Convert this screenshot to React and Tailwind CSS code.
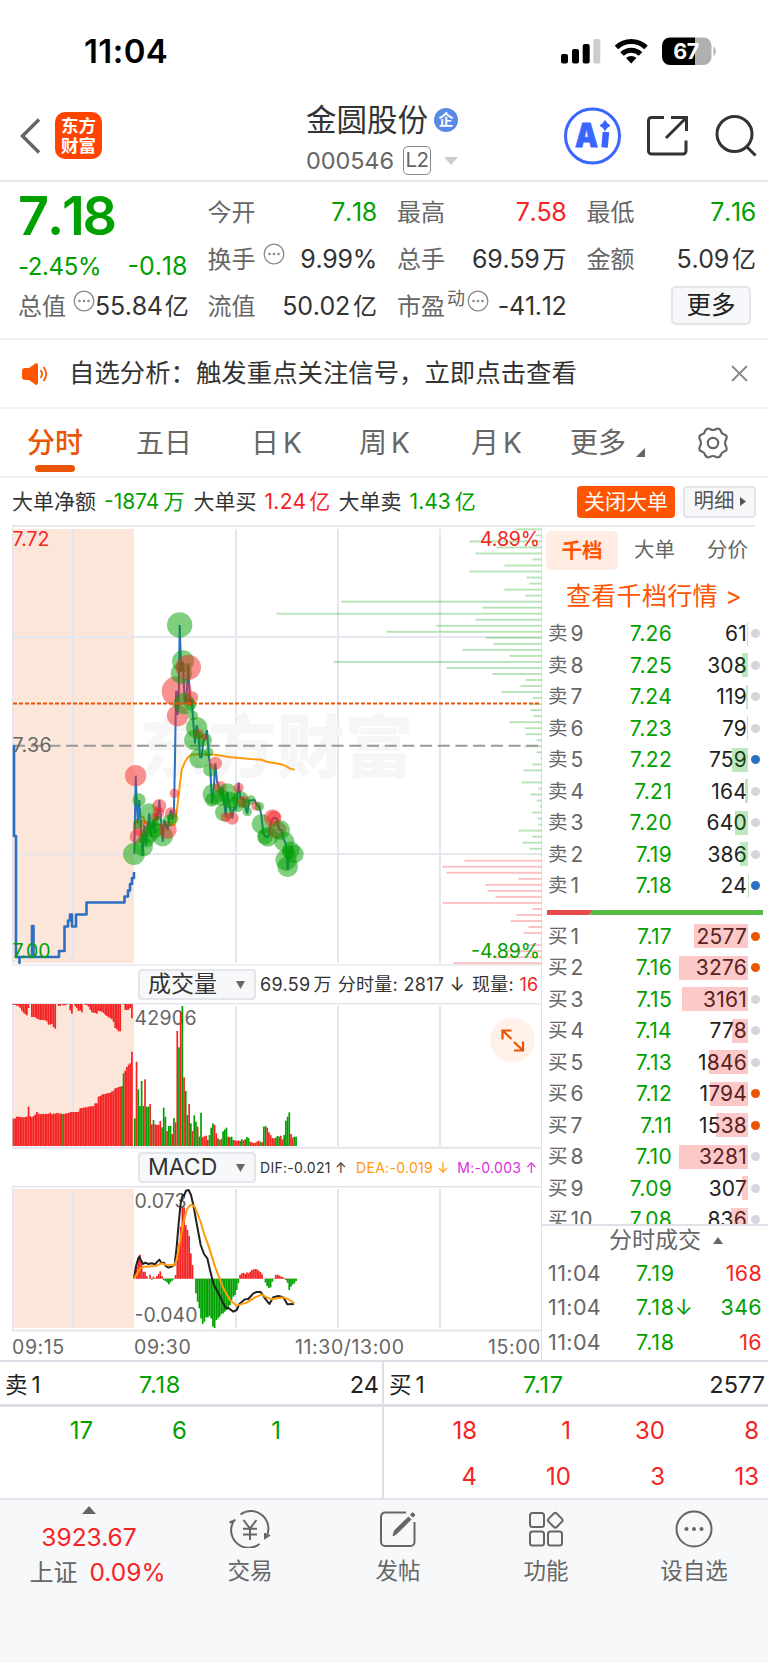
import clsx from 'clsx';

const RED = '#f52323';
const GREEN = '#00a000';

// Big order depth, bar lengths in px from the top of the chart down
const sellDepth = [26, 6, 72, 45, 66, 9, 37, 72, 15, 12, 37, 16, 200, 59, 265, 66, 105, 155, 56, 48, 79, 32, 208, 95, 49, 16, 21, 40, 9, 12, 11, 8, 32, 17, 16, 5, 17, 5, 1, 9, 18, 1, 20, 3, 11, 5, 2, 9, 4, 3, 23, 9, 19, 12, 1];
const buyDepth = [77, 99, 95, 23, 56, 54, 46, 99, 9, 25, 31, 13, 18, 1, 14, 36, 48, 88];

const auctionLine = '14,745 14,836 16,836 16,957 19.5,957 19.5,963 19.5,957 32,957 32,926 33.5,926 33.5,957 59,957 59,951 64.5,951 64.5,926.5 68,926.5 68,920.5 70,920.5 70,914.5 72,914.5 72,926.5 76,926.5 76,914.5 86.5,914.5 86.5,902.5 124.5,902.5 124.5,896.5 128,896.5 128,890.5 130,890.5 130,884 132,884 132,878 134,878 134,872';

// Intraday curves are stored at 3x
const priceLine = '43,762 47,527 53,670 58,600 63,690 68,768 73,675 78,735 83,680 88,640 92,710 98,665 103,690 108,640 113,660 118,600 123,660 128,725 133,660 138,680 143,690 148,650 153,630 158,660 162,625 165,480 168,275 171,275 173,345 176,310 179,75 184,215 189,185 194,310 199,300 205,190 210,310 215,295 220,370 225,430 230,375 235,400 240,472 245,472 250,425 256,415 261,390 266,460 271,510 276,610 281,570 286,490 291,545 297,560 303,590 308,560 313,610 317,650 322,575 327,610 332,635 337,655 342,620 347,630 352,590 356,548 361,590 367,600 372,595 377,625 382,640 387,602 404,600 410,615 418,620 424,645 430,700 436,710 445,710 452,670 460,653 470,655 478,690 485,690 490,715 497,730 503,810 508,760 513,740 520,760';
const averageLine = '47,665 60,650 70,650 75,668 90,675 150,675 165,674 172,620 180,550 185,510 195,485 205,470 215,464 240,463 285,464 310,468 325,471 360,474 390,477 425,479 440,485 480,492 495,497 510,506 524,509';

const bubbles = [
    ['g', 42, 762, 33], ['r', 47, 527, 32], ['g', 57, 600, 20], ['g', 88, 640, 30], ['r', 118, 618, 21], ['r', 65, 685, 26],
    ['r', 51, 710, 22], ['g', 55, 672, 16], ['r', 116, 638, 17], ['g', 70, 740, 29], ['g', 90, 702, 26], ['g', 80, 718, 24],
    ['g', 105, 690, 24], ['g', 128, 708, 31], ['r', 143, 690, 27], ['r', 106, 652, 14], ['r', 153, 640, 18], ['g', 158, 655, 17],
    ['g', 112, 664, 15], ['g', 98, 680, 20], ['g', 145, 662, 18], ['r', 163, 580, 14], ['r', 170, 274, 45], ['r', 173, 347, 32],
    ['g', 179, 75, 38], ['g', 189, 184, 33], ['g', 184, 220, 32], ['r', 205, 202, 38], ['g', 193, 311, 32], ['r', 217, 292, 18],
    ['g', 211, 314, 18], ['r', 208, 308, 10], ['g', 219, 347, 15], ['g', 230, 383, 32], ['r', 235, 402, 15], ['g', 223, 420, 31],
    ['g', 256, 420, 20], ['r', 254, 412, 9], ['g', 266, 456, 14], ['g', 238, 475, 30], ['g', 270, 510, 20], ['r', 286, 490, 20],
    ['g', 280, 583, 32], ['g', 275, 600, 20], ['r', 301, 562, 19], ['g', 322, 580, 30], ['g', 312, 637, 27], ['g', 302, 592, 25],
    ['g', 330, 600, 25], ['r', 317, 652, 15], ['r', 337, 655, 19], ['g', 350, 612, 25], ['g', 361, 598, 25], ['r', 356, 563, 15],
    ['r', 372, 605, 18], ['g', 382, 635, 14], ['g', 393, 600, 14], ['r', 408, 618, 14], ['g', 418, 620, 14], ['g', 378, 612, 14],
    ['g', 425, 672, 30], ['g', 435, 710, 24], ['g', 444, 710, 30], ['r', 458, 654, 26], ['r', 462, 652, 20], ['r', 472, 690, 27],
    ['g', 480, 690, 30], ['g', 493, 725, 30], ['g', 513, 750, 26], ['g', 498, 780, 32], ['g', 503, 800, 31], ['g', 523, 762, 28], ['g', 505, 755, 20],
];

const auctionVolume = [82, 83, 88, 88, 87, 86, 86, 87, 88, 118, 90, 86, 90, 94, 102, 97, 95, 96, 97, 96, 96, 97, 100, 95, 97, 97, 99, 98, 97, 97, 96, 97, 98, 99, 101, 102, 102, 102, 102, 103, 113, 114, 115, 116, 116, 118, 119, 119, 120, 128, 128, 148, 150, 154, 156, 156, 158, 159, 160, 163, 166, 173, 174, 177, 178, 180, 218, 226, 237, 244, 248, 283];
const auctionTop = [3, 3, 5, 7, 11, 20, 26, 30, 34, 12, 0, 39, 39, 40, 44, 46, 48, 48, 48, 49, 52, 62, 62, 60, 69, 74, 0, 6, 6, 2, 5, 4, 2, 0, 19, 29, 0, 7, 13, 21, 19, 25, 0, 3, 4, 8, 17, 25, 26, 27, 29, 21, 22, 23, 27, 32, 36, 40, 42, 46, 54, 72, 76, 82, 82, 0, 2, 17, 18, 17, 12, 43];

const volume = 'g475 r305 g388 g438 g363 g438 r358 g440 g440 r432 r493 g480 r493 r495 r494 r483 g502 g443 g470 r513 g498 g498 r522 g474 r487 r213 g262 r155 g138 r352 g393 g465 r432 g490 r513 g466 g485 r500 g530 g458 r532 r529 r527 r540 g525 g503 g490 r495 r520 g535 r540 r537 g514 g508 g503 r530 g532 g530 g540 r541 r543 r541 g543 g538 r541 r538 g531 g534 r545 r547 r549 r548 r545 r542 g545 r547 g500 g498 r503 r517 r525 r534 r535 g533 g528 g530 r527 r538 g525 g482 g470 g457 r522 r533 g530 g530'.split(' ');

const macd = [0, 36, 63, 72, 51, 21, 21, 8, 0, 12, -3, 6, 2, 8, 14, 22, 8, -4, -7, -11, -17, -11, -6, -2, 11, 56, 106, 156, 216, 214, 161, 146, 128, 76, 41, 0, -44, -69, -89, -119, -136, -129, -116, -116, -112, -119, -144, -148, -124, -119, -114, -106, -104, -99, -94, -89, -79, -64, -54, -49, -34, -14, 11, 16, 18, 14, 19, 16, 21, 26, 28, 29, 28, 24, 20, 13, 0, -12, -22, -28, -26, -9, -1, 11, 12, 10, 7, 5, 2, -4, -12, -34, -24, -17, -14, -7];
const difLine = '402,955 408,918 415,895 418,890 425,905 430,912 436,908 445,912 455,910 465,913 472,905 478,899 485,910 492,908 497,918 505,923 515,920 524,915 530,860 536,790 542,730 548,705 552,708 558,692 566,690 573,705 580,735 590,790 602,855 612,882 622,895 630,930 640,970 650,990 658,1005 670,1030 678,1045 685,1044 700,1055 710,1050 718,1032 735,1018 745,1017 760,1000 770,996 782,996 795,1015 808,1032 820,1012 835,1008 850,1012 862,1033 882,1032';
const deaLine = '402,955 412,940 420,925 435,920 465,918 485,910 500,915 522,916 530,900 537,860 550,790 560,750 568,738 576,734 585,742 600,780 612,820 628,865 645,920 670,985 690,1020 710,1037 740,1028 765,1012 785,1004 800,1012 815,1018 850,1012 865,1018 883,1029';

const sells = [
    ['9', '7.26', '61', 1], ['8', '7.25', '308', 6], ['7', '7.24', '119', 2], ['6', '7.23', '79', 1], ['5', '7.22', '759', 16, 'blue'],
    ['4', '7.21', '164', 3], ['3', '7.20', '640', 13], ['2', '7.19', '386', 8], ['1', '7.18', '24', 0.5, 'blue'],
];
const buys = [
    ['1', '7.17', '2577', 54, 'orange'], ['2', '7.16', '3276', 69, 'orange'], ['3', '7.15', '3161', 66], ['4', '7.14', '778', 16], ['5', '7.13', '1846', 39],
    ['6', '7.12', '1794', 38, 'orange'], ['7', '7.11', '1538', 32, 'orange'], ['8', '7.10', '3281', 69], ['9', '7.09', '307', 6], ['10', '7.08', '836', 17],
];

function StatusBar() {
    return (
        <div className="flex h-[85px] items-start justify-between pl-[84px] pr-[50px] text-black">
            <span className="mt-[31px] text-[33px] leading-10 font-semibold tracking-[0.4px]">11:04</span>
            <svg className="mt-9" width="157" height="30" viewBox="561 36 157 30">
                <rect x="561" y="54" width="7" height="9.5" rx="2" />
                <rect x="572" y="49" width="7" height="14.5" rx="2" />
                <rect x="582.7" y="44" width="7" height="19.5" rx="2" />
                <rect x="593.3" y="39" width="7" height="24.5" rx="2" fill="#cccccc" />
                <g fill="none" stroke="#000" strokeWidth="5">
                    <path d="M616.5 47.5a21 21 0 0 1 29.5 0" />
                    <path d="M622 54a13.2 13.2 0 0 1 18.5 0" />
                </g>
                <path d="M631.2 63.5l-5.2-5.5a7.6 7.6 0 0 1 10.4 0z" />
                <clipPath id="battery"><rect x="662" y="37.5" width="49.5" height="27.5" rx="8" /></clipPath>
                <g clipPath="url(#battery)">
                    <rect x="662" y="37" width="33" height="29" />
                    <rect x="695" y="37" width="17" height="29" fill="#b0b0b0" />
                </g>
                <path d="M713.5 46.5v9.5c3-1.5 3-8 0-9.5z" fill="#b0b0b0" />
                <text x="686" y="59" fontSize="21.5" fontWeight="700" fill="#fff" textAnchor="middle" letterSpacing="-.5">67</text>
            </svg>
        </div>
    );
}

function Header() {
    return (
        <header className="flex h-[97px] items-start border-b-2 border-[#e9e9ec]">
            <svg className="mt-[33px] ml-5" width="22" height="36" viewBox="0 0 22 36" fill="none" stroke="#666" strokeWidth="3.5"><path d="M19 1.5L2.5 18 19 34.5" /></svg>
            <div className="mt-[27px] ml-[13px] flex h-[47px] w-[47px] flex-col items-center justify-center rounded-[10px] bg-[#ff4400] text-[17.5px] leading-5 font-bold text-white">
                <span>东方</span>
                <span>财富</span>
            </div>
            <div className="mt-[15px] ml-[204px] w-[256px]">
                <div className="flex h-[39px] items-center">
                    <span className="text-[30.5px] leading-[38px] text-[#333]">金圆股份</span>
                    <span className="ml-1.5 flex h-6 w-6 items-center justify-center rounded-full bg-[#5a8ae8] text-[15px] leading-4 font-bold text-white">企</span>
                </div>
                <div className="flex h-[43px] items-center text-[#666]">
                    <span className="text-[23.5px] tracking-[-0.1px]">000546</span>
                    <span className="ml-[9px] flex h-[29px] w-7 items-center justify-center rounded-[5px] border-[1.5px] border-[#888] text-[20.5px] tracking-[-0.5px]">L2</span>
                    <svg className="ml-[13px]" width="14" height="8" fill="#ccc"><path d="M0 0h14L7 8z" /></svg>
                </div>
            </div>
            <svg className="mt-5" width="200" height="62" viewBox="562 105 200 62" fill="none" stroke="#333" strokeWidth="3">
                <circle cx="592.5" cy="136" r="27" stroke="#3966ff" />
                <text x="575" y="147" fontSize="33" fontWeight="900" fill="#3966ff" stroke="#3966ff" strokeWidth=".8" textLength="23" lengthAdjust="spacingAndGlyphs">A</text>
                <path d="M606 132l-1.500 15.500" stroke="#3966ff" strokeWidth="6.5" />
                <path d="M605 120.5l2 3 3 2-3 2-2 3-2-3-3-2 3-2z" fill="#3966ff" stroke="#3966ff" strokeWidth="1" />
                <path d="M664 117.5h-12.5a3 3 0 0 0-3 3V151a3 3 0 0 0 3 3H683a3 3 0 0 0 3-3v-10.5M686.5 131v-13.5H671M686 118l-20 20" />
                <circle cx="734.5" cy="134" r="17.5" />
                <path d="M746.5 146.5l9 9" />
            </svg>
        </header>
    );
}

function Dots() {
    return (
        <svg className="ml-[7px] -mt-3 shrink-0" width="22" height="22" viewBox="0 0 22 22">
            <circle cx="11" cy="11" r="9.8" fill="none" stroke="#888" strokeWidth="1.3" />
            <g fill="#888"><circle cx="6.5" cy="11" r="1.3" /><circle cx="11" cy="11" r="1.3" /><circle cx="15.5" cy="11" r="1.3" /></g>
        </svg>
    );
}

function Item({ label, value, unit, sup, dots, color = 'text-[#333]' }) {
    return (
        <div className="flex h-[47px] items-center text-[24px] whitespace-nowrap text-[#666]">
            {label}
            {sup && <span className="ml-0.5 -mr-[5px] -mt-4 text-[18px]">{sup}</span>}
            {dots && <Dots />}
            <span className={clsx('ml-auto text-[25px] tracking-[-0.3px] [font-kerning:none]', color)}>{value}</span>
            {unit && <span className={clsx(dots ? 'ml-0.5' : 'ml-[3px]', color)}>{unit}</span>}
        </div>
    );
}

function Quote() {
    return (
        <section className="grid h-[158px] grid-cols-4 gap-x-5 border-b-2 border-[#f2f2f4] pt-[7px] pr-3 pl-[18px]">
            <div className="text-[#00a000]">
                <div className="h-[54px] text-[54px] leading-[54px] font-semibold tracking-[-2.2px] [font-kerning:none]">7.18</div>
                <div className="flex h-10 items-center justify-between pt-2 text-[24px] tracking-[-0.4px]"><span>-2.45%</span><span className="text-[25px] tracking-normal [font-kerning:none]">-0.18</span></div>
                <Item label="总值" dots value="55.84" unit="亿" />
            </div>
            <div>
                <Item label="今开" value="7.18" color="text-[#00a000]" />
                <Item label="换手" dots value="9.99%" />
                <Item label="流值" value="50.02" unit="亿" />
            </div>
            <div>
                <Item label="最高" value="7.58" color="text-[#f52323]" />
                <Item label="总手" value="69.59" unit="万" />
                <Item label="市盈" sup="动" dots value="-41.12" />
            </div>
            <div>
                <Item label="最低" value="7.16" color="text-[#00a000]" />
                <Item label="金额" value="5.09" unit="亿" />
                <button className="mt-[3px] mr-[5px] ml-auto flex h-[39px] w-20 items-center justify-center rounded-[5px] border-2 border-[#e3e5ea] bg-[#f7f8fa] text-[24.5px] text-[#222]">更多</button>
            </div>
        </section>
    );
}

function Tabs() {
    return (
        <nav className="flex h-[69px] items-center border-b-2 border-[#f2f2f4] text-[28px] leading-[40px] text-[#666]">
            <div className="ml-[27px] flex w-14 flex-col items-center pt-2.5 font-medium text-[#ea5504]">
                分时
                <span className="mt-0.5 h-[7px] w-10 rounded-full bg-[#ea5504]" />
            </div>
            <span className="ml-[53px] w-[115px]">五日</span>
            <span className="w-[108px]">日<span className="ml-1">K</span></span>
            <span className="w-[112px]">周<span className="ml-1">K</span></span>
            <span className="w-[99px]">月<span className="ml-1">K</span></span>
            <span>更多</span>
            <svg className="mt-5 ml-2.5" width="9" height="9" fill="#666"><path d="M9 0v9H0z" /></svg>
            <svg className="ml-[51px]" width="34" height="34" viewBox="0 0 34 34" fill="none" stroke="#666" strokeWidth="2.2">
                <path d="M12 2.5c2 0 2.500 1.500 5 1.500s3-1.500 5-1.500c2.500.5 3 2 3.500 4s3.500 1.500 5 3.500c1 2.500-1.500 4-1.500 7s2.500 4.500 1.500 7c-1.500 2-4.500 1.500-5 3.500s-1 3.500-3.500 4c-2 0-2.500-1.500-5-1.500s-3 1.500-5 1.500c-2.500-.5-3-2-3.500-4s-3.500-1.500-5-3.500c-1-2.500 1.500-4 1.500-7s-2.500-4.500-1.500-7c1.500-2 4.500-1.500 5-3.500s1-3.500 3.500-4z" strokeLinejoin="round" />
                <circle cx="17" cy="17" r="5.2" />
            </svg>
        </nav>
    );
}

function Summary() {
    return (
        <div className="ml-3 mr-[13px] flex h-[49px] items-center border-b-2 border-[#e6e7eb] text-[21px] whitespace-nowrap text-[#333]">
            <span>大单净额</span>
            <span className="ml-2 text-[#00a000]">-1874<span className="ml-1">万</span></span>
            <span className="ml-[9px]">大单买</span>
            <span className="ml-2 tracking-[0.3px] text-[#f52323]">1.24<span className="ml-[3px]">亿</span></span>
            <span className="ml-2">大单卖</span>
            <span className="ml-2 text-[#00a000]">1.43<span className="ml-1">亿</span></span>
            <button className="ml-auto h-8 w-[98px] rounded bg-[#ff5500] text-[21px] leading-8 text-white">关闭大单</button>
            <button className="ml-2 -mr-px flex h-8 w-[73px] items-center justify-center gap-[5px] rounded border-2 border-[#e3e5ea] bg-[#f7f8fa] text-[20.5px] text-[#555]">
                明细
                <svg width="6" height="9" fill="#555"><path d="M0 0l6 4.5L0 9z" /></svg>
            </button>
        </div>
    );
}

function Grid({ top, bottom }) {
    return (
        <g>
            <rect x="12.5" y={top} width="121.5" height={bottom - top} fill="#fce6da" />
            <g stroke="#e5e7ee" strokeWidth="2">
                {[73, 236, 338, 440].map(x => <path key={x} d={`M${x} ${top}V${bottom}`} />)}
            </g>
            <path d={`M12.5 ${top - 2}V${bottom + 2}`} stroke="#e0e2ea" />
        </g>
    );
}

function PriceChart() {
    return (
        <svg className="block" width="530" height="439" viewBox="12 527 530 439" fontSize="19.5">
            <Grid top={529} bottom={963} />
            <path d="M13 637H541M13 854H541" stroke="#e5e7ee" strokeWidth="2" />
            <path d="M12 965H542" stroke="#eeeff2" strokeWidth="2" />
            <text x="140" y="772" fontSize="68" fontWeight="900" fill="#f6f6f6" textLength="273">东方财富</text>
            <g fill={GREEN} opacity=".28">
                {sellDepth.map((w, i) => <rect key={i} x={541.5 - w} y={528.4 + i * 6.026} width={w} height="1.9" />)}
            </g>
            <g fill={RED} opacity=".28">
                {buyDepth.map((w, i) => <rect key={i} x={541.5 - w} y={859.8 + i * 6.026} width={w} height="1.9" />)}
            </g>
            <path d="M13 745.7H538" stroke="#999" strokeWidth="2" strokeDasharray="12 5.7" />
            <polyline points={auctionLine} fill="none" stroke="#2c70c2" strokeWidth="2.6" strokeLinejoin="round" />
            <g transform="translate(120 600) scale(.33333)">
                <polyline points={averageLine} fill="none" stroke="#ff9a0a" strokeWidth="6" />
                <polyline points={priceLine} fill="none" stroke="#2c70c2" strokeWidth="6" strokeLinejoin="bevel" />
                {bubbles.map(([c, x, y, r], i) => <circle key={i} cx={x} cy={y} r={r} fill={c === 'g' ? GREEN : RED} opacity=".5" />)}
            </g>
            <path d="M13 703.5H541" stroke="#ea5504" strokeWidth="1.8" strokeDasharray="4 2" />
            <text x="12.5" y="546" fill={RED} textLength="37">7.72</text>
            <text x="12.5" y="752" fill="#666" textLength="39">7.36</text>
            <text x="12.5" y="957.5" fill={GREEN} textLength="38">7.00</text>
            <text x="540" y="546" fill={RED} textAnchor="end" textLength="60">4.89%</text>
            <text x="540" y="957.5" fill={GREEN} textAnchor="end" textLength="69">-4.89%</text>
        </svg>
    );
}

function VolumeChart() {
    return (
        <svg className="block" width="530" height="146" viewBox="12 1003 530 146">
            <path d="M12 1003.5H542M12 1147.8H542" stroke="#e3e5ea" strokeWidth="2" />
            <Grid top={1006} bottom={1146} />
            {auctionVolume.map((h, i) => <rect key={i} x={12.7 + i * 1.667} y={1146 - h / 3} width="1.7" height={h / 3} fill={i === 29 || i === 65 || i === 66 ? GREEN : RED} />)}
            {auctionTop.map((h, i) => <rect key={i} x={12.7 + i * 1.667} y="1004" width="1.7" height={h / 3} fill={RED} />)}
            <text x="134.5" y="1025" fontSize="19.5" fill="#666" textLength="62">42906</text>
            {volume.map((v, i) => {
                const h = (558 - Number(v.slice(1))) / 3;
                return <rect key={i} x={134 + i * 1.697} y={1146 - h} width="1.7" height={h} fill={v[0] === 'g' ? GREEN : RED} />;
            })}
            <circle cx="512.5" cy="1040" r="22.5" fill="#fff0e9" />
            <path d="M502.5 1039.5v-9h9M503 1031l8.5 8M523 1041.5v9h-9M522.5 1050l-8.5-8" fill="none" stroke="#ea5504" strokeWidth="2.2" />
        </svg>
    );
}

function MacdChart() {
    return (
        <svg className="block" width="530" height="146" viewBox="12 1186 530 146" fontSize="19.5">
            <path d="M12 1186.5H542M12 1330.5H542" stroke="#e3e5ea" strokeWidth="2" />
            <Grid top={1189} bottom={1328} />
            <path d="M134 1278.5H297" stroke="#fbb" strokeWidth=".6" />
            {macd.map((v, i) => {
                const h = Math.abs(v) / 3;
                return <rect key={i} x={134 + i * 1.697} y={v > 0 ? 1278.7 - h : 1278.7} width="1.7" height={h} fill={v > 0 ? RED : GREEN} />;
            })}
            <text x="134.5" y="1207.5" fill="#666" textLength="52">0.073</text>
            <text x="134.5" y="1322" fill="#666" textLength="63">-0.040</text>
            <g transform="translate(0 960) scale(.33333)" fill="none" strokeWidth="6" strokeLinejoin="round">
                <polyline points={difLine} stroke="#222" />
                <polyline points={deaLine} stroke="#ff9a0a" />
            </g>
        </svg>
    );
}

function Picker({ children }) {
    return (
        <button className="ml-[126px] flex h-[31px] w-[118px] shrink-0 items-center justify-between rounded border-2 border-[#e3e5ea] bg-[#f7f8fa] pr-[9px] pl-2 text-[23px] leading-[27px] tracking-normal text-[#333]">
            {children}
            <svg width="9" height="8" fill="#666"><path d="M0 0h9L4.5 8z" /></svg>
        </button>
    );
}

function Charts() {
    return (
        <div className="ml-3 w-[530px] shrink-0 border-r border-[#dfe1e8]">
            <PriceChart />
            <div className="flex h-[37px] items-center text-[18px] whitespace-nowrap text-[#333]">
                <Picker>成交量</Picker>
                <span className="ml-1 tracking-[0.3px]">69.59<span className="ml-[3px]">万</span></span>
                <span className="ml-1.5 tracking-[0.3px]">分时量: 2817 ↓</span>
                <span className="ml-[7px] tracking-[0.3px]">现量: <span className="text-[#f52323]">16</span></span>
            </div>
            <VolumeChart />
            <div className="flex h-[37px] items-center text-[14px] tracking-[0.3px] whitespace-nowrap text-[#333]">
                <Picker>MACD</Picker>
                <span className="ml-1">DIF:-0.021 ↑</span>
                <span className="ml-[9px] text-[#ff9a0a]">DEA:-0.019 ↓</span>
                <span className="ml-2 text-[#e02be0]">M:-0.003 ↑</span>
            </div>
            <MacdChart />
            <div className="flex h-7 items-center pt-[3px] text-[19.5px] tracking-[0.6px] text-[#666]">
                <span className="w-[122px]">09:15</span>
                <span className="w-[161px]">09:30</span>
                <span>11:30/13:00</span>
                <span className="ml-auto">15:00</span>
            </div>
        </div>
    );
}

function Level({ side, row }) {
    const [n, price, count, bar, dot] = row;
    return (
        <div className="flex h-[31.5px] items-center text-[21px] text-[#666]">
            <span className="text-[19.5px]">{side}</span>
            <span className="ml-[3px] tracking-[0.3px]">{n}</span>
            <div className="ml-auto tracking-[0.3px] text-[#00a000]">{price}</div>
            <div className="relative flex h-6 w-[76px] items-center justify-end pr-px tracking-[0.2px] text-[#222]">
                {count}
                <span className={clsx('absolute top-0 right-0 h-6', side === '卖' ? 'bg-[#00a000]/25' : 'bg-[#f52323]/25')} style={{ width: bar }} />
            </div>
            <span className={clsx('ml-[3px] h-[9px] w-[9px] rounded-full', dot === 'blue' ? 'bg-[#2c70c2]' : dot === 'orange' ? 'bg-[#ea5504]' : 'bg-[#d3d6dc]')} />
        </div>
    );
}

function OrderBook() {
    return (
        <div className="flex-1">
            <div className="mt-1 ml-1 flex h-[39px] items-center text-[20.5px] text-[#666]">
                <span className="w-[72px] rounded-md bg-[#ffece3] text-center leading-[39px] font-bold text-[#ff5500]">千档</span>
                <span className="w-[73px] text-center">大单</span>
                <span className="w-[73px] text-center">分价</span>
            </div>
            <div className="h-[48px] pl-6 text-[25px] leading-[52px] tracking-[0.3px] whitespace-nowrap text-[#ff5500]">查看千档行情 &gt;</div>
            <div className="pr-2 pl-1.5">
                {sells.map(row => <Level key={row[0]} side="卖" row={row} />)}
            </div>
            <svg className="mt-[8px] ml-[5px] block" width="216" height="5">
                <path d="M0 0h46l-4 5H0z" fill="#e84a4a" />
                <path d="M46 0h170v5H42z" fill="#58bb44" />
            </svg>
            <div className="mt-1.5 h-[303px] overflow-hidden pr-2 pl-1.5">
                {buys.map(row => <Level key={row[0]} side="买" row={row} />)}
            </div>
            <div className="flex h-8 items-center justify-center gap-3 border-t-2 border-[#dfe1e8] pl-[22px] text-[23px] text-[#666]">
                分时成交
                <svg width="10" height="7" fill="#666"><path d="M5 0l5 7H0z" /></svg>
            </div>
            {[['7.19', '168', 'text-[#f52323]'], ['7.18↓', '346', 'text-[#00a000]'], ['7.18', '16', 'text-[#f52323]']].map(([price, count, color], i) => (
                <div key={i} className="flex h-[34.7px] items-center pr-1.5 pl-1.5 text-[21.5px]">
                    <span className="w-[88px] tracking-[0.4px] text-[#666]">11:04</span>
                    <span className="tracking-[0.7px] text-[#00a000]">{price}</span>
                    <span className={clsx('ml-auto tracking-[0.3px]', color)}>{count}</span>
                </div>
            ))}
        </div>
    );
}

function Queue({ side, price, total, items, color, className }) {
    return (
        <div className={className}>
            <div className="flex h-[45px] items-center border-b-[3px] border-[#dcdfe6] pt-1 pr-[3px] pl-[5px] text-[23.5px] text-[#222]">
                <span className="w-[134px] text-[22.5px]">{side}<span className="ml-1">1</span></span>
                <span className="tracking-[0.7px] text-[#00a000]">{price}</span>
                <span className="ml-auto">{total}</span>
            </div>
            <div className={clsx('-ml-px mt-px grid w-[376px] grid-cols-4 text-right text-[24px] leading-[45.5px]', color)}>
                {items.map((v, i) => <span key={i}>{v}</span>)}
            </div>
        </div>
    );
}

function NavItem({ label, children }) {
    return (
        <div className="flex w-[148px] flex-col items-center pt-2.5">
            <svg width="42" height="38" viewBox="0 0 42 38" fill="none" stroke="#666" strokeWidth="2">{children}</svg>
            <span className="mt-1.5 text-[22.5px] leading-[34px]">{label}</span>
        </div>
    );
}

function BottomNav() {
    return (
        <nav className="flex h-[165px] border-t-2 border-[#e3e5ea] bg-[#f7f8fa] text-[#666]">
            <div className="flex w-[178px] flex-col items-center pt-1.5 text-[24.5px] leading-9 text-[#f52323]">
                <svg width="14" height="8" fill="#666"><path d="M7 0l7 8H0z" /></svg>
                <span className="mt-[5px]">3923.67</span>
                <span className="pl-[17px] -mt-px whitespace-nowrap"><span className="mr-3 text-[24px] text-[#666]">上证</span>0.09%</span>
            </div>
            <div className="-ml-0.5 flex">
                <NavItem label="交易">
                    <path d="M11.5 4.5A17.5 17.5 0 0 1 37.5 26.5M30.5 34A17.5 17.5 0 0 1 4.5 11.5M.5 12.5l6-2.5M41 25l-5 3v-5" />
                    <path d="M14.5 10l6.5 8.5L27.5 10M21 18.5V30M14 18.8h14M14 24.5h14" />
                </NavItem>
                <NavItem label="发帖">
                    <path d="M29 2.5H8a4 4 0 0 0-4 4V32a4 4 0 0 0 4 4h25.5a4 4 0 0 0 4-4V12" />
                    <path d="M16 26l1.5-5.5L31.5 7l2.5 2.5L20 23.5zM33.5 5l2-2.5 2.5 2.5-2 2z" fill="#666" strokeWidth="1" />
                </NavItem>
                <NavItem label="功能">
                    <rect x="5" y="3" width="14" height="14" rx="2.5" />
                    <rect x="5" y="21.5" width="14" height="14" rx="2.5" />
                    <rect x="23" y="21.5" width="14" height="14" rx="2.5" />
                    <rect x="24.5" y="4.5" width="11.5" height="11.5" rx="2" transform="rotate(45 30.25 10.25)" />
                </NavItem>
                <NavItem label="设自选">
                    <circle cx="21" cy="19" r="17.5" />
                    <g fill="#666" strokeWidth="0"><circle cx="13.5" cy="19" r="2" /><circle cx="21" cy="19" r="2" /><circle cx="28.5" cy="19" r="2" /></g>
                </NavItem>
            </div>
        </nav>
    );
}

function App() {
    return (
        <div className="h-[1663px] w-[768px] overflow-hidden bg-white font-[family-name:Inter,'Noto_Sans_CJK_SC',sans-serif]">
            <StatusBar />
            <Header />
            <Quote />
            <div className="flex h-[69px] items-center border-b-2 border-[#f2f2f4] pr-[20px] pl-[22px]">
                <svg width="26" height="22" viewBox="0 0 26 22" fill="#ff5500">
                    <path d="M0 8a3 3 0 0 1 3-3h4l7-5q2 0 2 2v18q0 2-2 2l-7-5H3a3 3 0 0 1-3-3z" />
                    <path d="M18.5 7q3 4 0 8M21.5 4q5.5 7 0 14" fill="none" stroke="#ff5500" strokeWidth="1.8" />
                </svg>
                <span className="ml-[21px] text-[25.4px] text-[#333]">自选分析：触发重点关注信号，立即点击查看</span>
                <svg className="ml-auto" width="17" height="17" stroke="#888" strokeWidth="1.8"><path d="M1 1l15 15M16 1L1 16" /></svg>
            </div>
            <Tabs />
            <Summary />
            <div className="flex h-[833px]">
                <Charts />
                <OrderBook />
            </div>
            <div className="flex h-[138px] border-t-2 border-[#dcdfe6]">
                <Queue className="w-[382px]" side="卖" price="7.18" total="24" items={[17, 6, 1]} color="text-[#00a000]" />
                <Queue className="w-[386px] border-l-2 border-[#dcdfe6]" side="买" price="7.17" total="2577" items={[18, 1, 30, 8, 4, 10, 3, 13]} color="text-[#f52323]" />
            </div>
            <BottomNav />
        </div>
    );
}

export default App;
